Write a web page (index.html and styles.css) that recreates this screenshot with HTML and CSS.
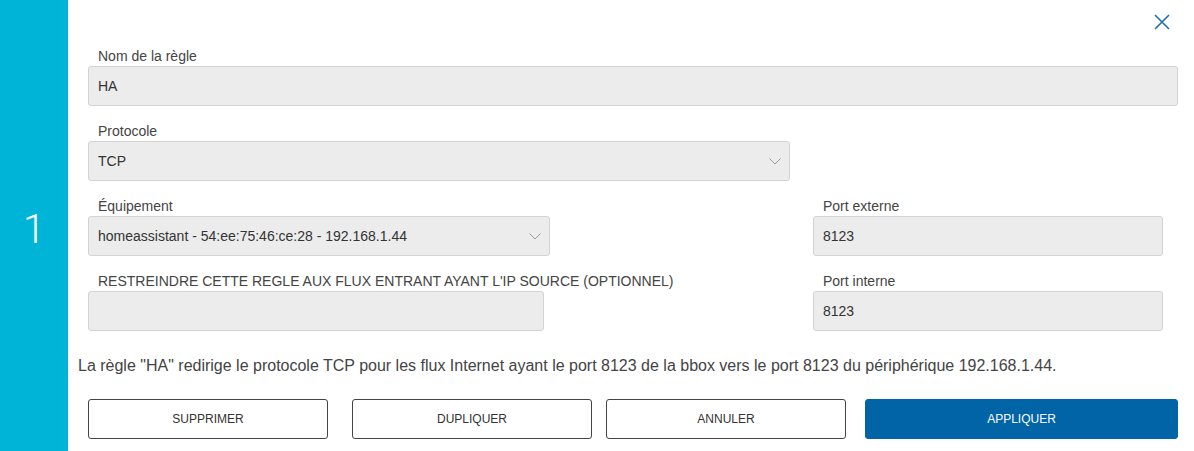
FILE: index.html
```html
<!DOCTYPE html>
<html lang="fr">
<head>
<meta charset="utf-8">
<title>Règle</title>
<link rel="stylesheet" href="styles.css">
</head>
<body>
<div class="page">
  <aside class="rail"><span class="num">1</span></aside>
  <main class="panel">
    <button class="close" aria-label="Fermer">
      <svg width="16" height="16" viewBox="0 0 16 16"><path d="M1 1 L15 15 M15 1 L1 15" stroke="#1f6db0" stroke-width="1.6" fill="none"/></svg>
    </button>
    <form class="form">
      <div class="field">
        <label class="label">Nom de la règle</label>
        <div class="input">HA</div>
      </div>
      <div class="field w-proto">
        <label class="label">Protocole</label>
        <div class="input select">TCP<svg class="chev" width="12" height="7" viewBox="0 0 12 7"><path d="M0.5 0.5 L6 6 L11.5 0.5" stroke="#9a9a9a" stroke-width="1" fill="none"/></svg></div>
      </div>
      <div class="pair">
        <div class="field w-equip">
          <label class="label">Équipement</label>
          <div class="input select">homeassistant - 54:ee:75:46:ce:28 - 192.168.1.44<svg class="chev" width="12" height="7" viewBox="0 0 12 7"><path d="M0.5 0.5 L6 6 L11.5 0.5" stroke="#9a9a9a" stroke-width="1" fill="none"/></svg></div>
        </div>
        <div class="field">
          <label class="label">Port externe</label>
          <div class="input">8123</div>
        </div>
      </div>
      <div class="pair">
        <div class="field w-ip">
          <label class="label">RESTREINDRE CETTE REGLE AUX FLUX ENTRANT AYANT L'IP SOURCE (OPTIONNEL)</label>
          <div class="input"></div>
        </div>
        <div class="field">
          <label class="label">Port interne</label>
          <div class="input">8123</div>
        </div>
      </div>
    </form>
    <p class="summary">La règle "HA" redirige le protocole TCP pour les flux Internet ayant le port 8123 de la bbox vers le port 8123 du périphérique 192.168.1.44.</p>
    <div class="actions">
      <button type="button" class="btn b1">SUPPRIMER</button>
      <button type="button" class="btn b2">DUPLIQUER</button>
      <button type="button" class="btn b3">ANNULER</button>
      <button type="button" class="btn primary">APPLIQUER</button>
    </div>
  </main>
</div>
</body>
</html>
```
FILE: styles.css
```css
* { box-sizing: border-box; }
html, body { margin: 0; padding: 0; background: #fff; }
body {
  font-family: "Liberation Sans", Arial, sans-serif;
  color: #333;
  width: 1194px;
  height: 451px;
  overflow: hidden;
}
.page {
  display: flex;
  height: 451px;
}
.rail {
  width: 68px;
  flex: none;
  background: #00b4d8;
  display: flex;
  align-items: center;
  justify-content: center;
  padding-top: 8px;
}
.num {
  color: #fff;
  font-family: Roboto, "Liberation Sans", sans-serif;
  font-weight: 300;
  font-size: 40px;
  line-height: 1;
}
.panel {
  position: relative;
  flex: 1;
  padding: 46px 16px 0 10px;
}
.close {
  position: absolute;
  top: 14px;
  right: 24px;
  border: 0;
  background: none;
  padding: 0;
  width: 16px;
  height: 16px;
  cursor: pointer;
}
.close svg { display: block; }
.form {
  padding-left: 10px;
  display: flex;
  flex-direction: column;
  gap: 15px;
}
.field {
  display: flex;
  flex-direction: column;
}
.label {
  font-size: 14px;
  line-height: 20px;
  color: #444;
  padding-left: 10px;
  white-space: nowrap;
}
.input {
  height: 40px;
  background: #ececec;
  border: 1px solid #d3d3d3;
  border-radius: 3px;
  font-size: 14px;
  color: #333;
  padding: 0 9px;
  display: flex;
  align-items: center;
}
.select { justify-content: space-between; padding-right: 8px; }
.chev { flex: none; }
.w-proto { width: 702px; }
.pair {
  display: grid;
  grid-template-columns: 725px 350px;
}
.w-equip { width: 462px; }
.w-ip { width: 456px; }
.summary {
  margin: 23px 0 0;
  font-size: 16px;
  line-height: 24px;
  color: #444;
}
.actions {
  display: flex;
  margin-top: 21px;
  padding-left: 10px;
}
.btn {
  height: 40px;
  width: 240px;
  border: 1px solid #444;
  border-radius: 3px;
  background: #fff;
  font-family: "Liberation Sans", Arial, sans-serif;
  font-size: 12px;
  color: #333;
  padding: 0;
}
.b2 { margin-left: 24px; }
.b3 { margin-left: 14px; }
.primary {
  margin-left: 19px;
  width: 313px;
  background: #0064a7;
  border-color: #0064a7;
  color: #fff;
}
```
